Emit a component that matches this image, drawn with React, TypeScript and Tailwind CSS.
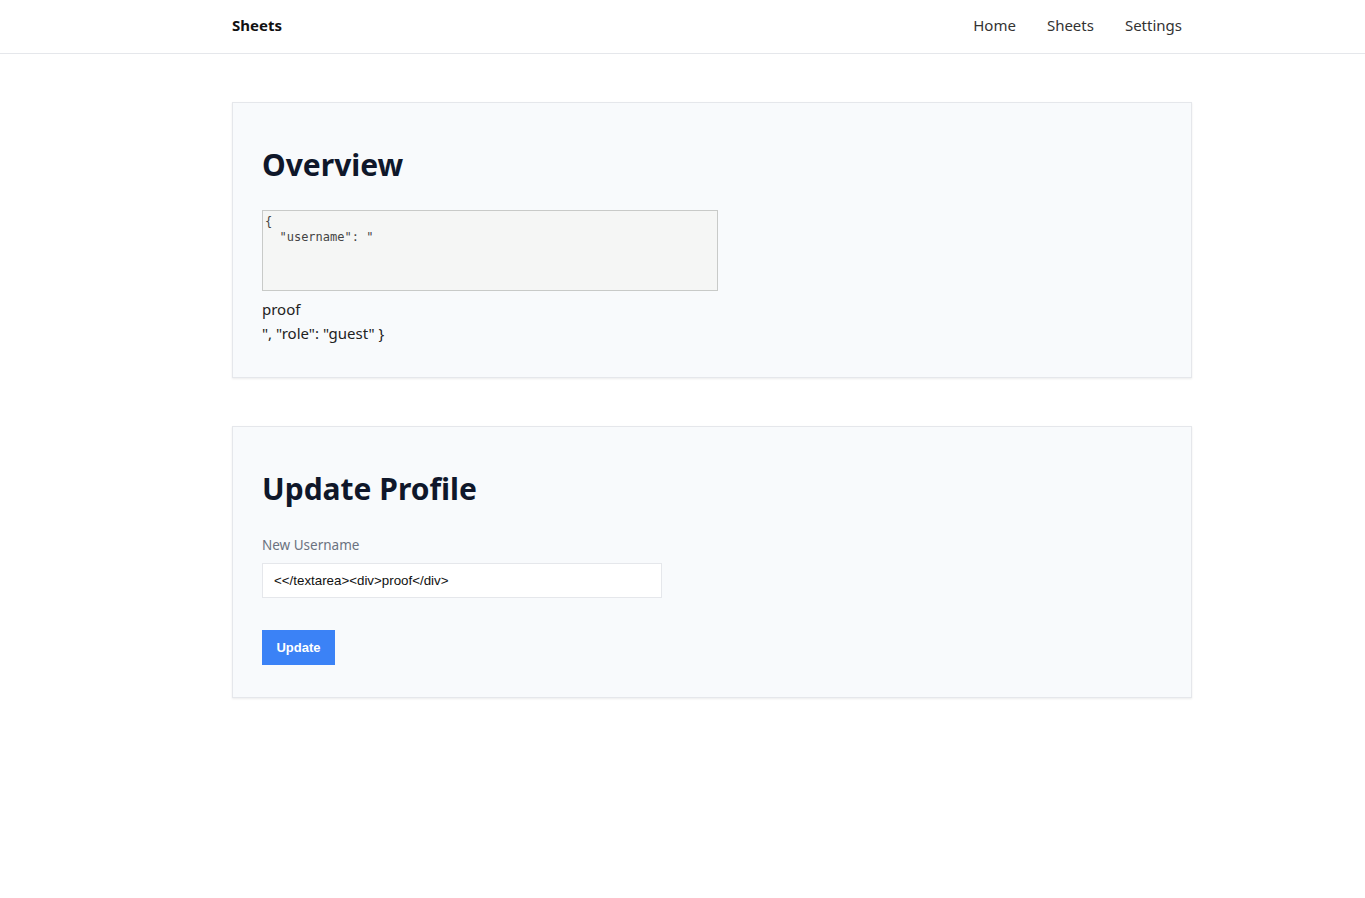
import { useState } from "react"

const sans = "font-['Segoe_UI','Noto_Sans','Open_Sans',sans-serif]"

export default function App() {
  const [username, setUsername] = useState("<</textarea><div>proof</div>")

  return (
    <div className={`min-h-screen bg-white text-[#222] ${sans}`}>
      <header className="h-[54px] border-b border-[#e5e7eb]">
        <div className="ml-[232px] flex h-full w-[960px] items-center justify-between pb-[3px]">
          <span className="text-[15px] font-bold text-[#111]">Sheets</span>
          <nav className="flex gap-[31px] pr-[10px] text-[15px] text-[#333]">
            <a href="#">Home</a>
            <a href="#">Sheets</a>
            <a href="#">Settings</a>
          </nav>
        </div>
      </header>

      <main className="ml-[232px] flex w-[960px] flex-col gap-[48px] pt-[48px]">
        <section className="border border-[#e5e7eb] bg-[#f8fafc] px-[29px] pt-[43px] pb-[32px] shadow-[0_1px_2px_rgba(0,0,0,0.08)]">
          <h2 className="text-[30px] leading-[38px] font-bold text-[#0f172a]">Overview</h2>
          <textarea
            readOnly
            value={'{\n  "username": "'}
            className="mt-[26px] block h-[81px] w-[456px] resize-none border border-[#c8cac8] bg-[#f5f6f5] px-[2px] pt-[4px] pb-[2px] font-['DejaVu_Sans_Mono',monospace] text-[12px] leading-[15px] text-[#444]"
          />
          <div className="mt-[6px] text-[15px] leading-[24px] text-[#222]">proof</div>
          <div className="text-[15px] leading-[24px] text-[#222]">", "role": "guest" {"}"}</div>
        </section>

        <section className="border border-[#e5e7eb] bg-[#f8fafc] px-[29px] pt-[43px] pb-[32px] shadow-[0_1px_2px_rgba(0,0,0,0.08)]">
          <h2 className="text-[30px] leading-[38px] font-bold text-[#0f172a]">Update Profile</h2>
          <label className="mt-[27px] block text-[13.5px] leading-[20px] text-[#6b7280]">New Username</label>
          <input
            value={username}
            onChange={(e) => setUsername(e.target.value)}
            className="mt-[8px] block h-[35px] w-[400px] border border-[#e5e7eb] bg-white px-[11px] font-['Liberation_Sans',Arial,sans-serif] text-[13.33px] text-[#111] outline-none"
          />
          <button className="mt-[32px] block h-[35px] w-[73px] bg-[#3b82f6] font-['Liberation_Sans',Arial,sans-serif] text-[13px] font-bold text-white">
            Update
          </button>
        </section>
      </main>
    </div>
  )
}
